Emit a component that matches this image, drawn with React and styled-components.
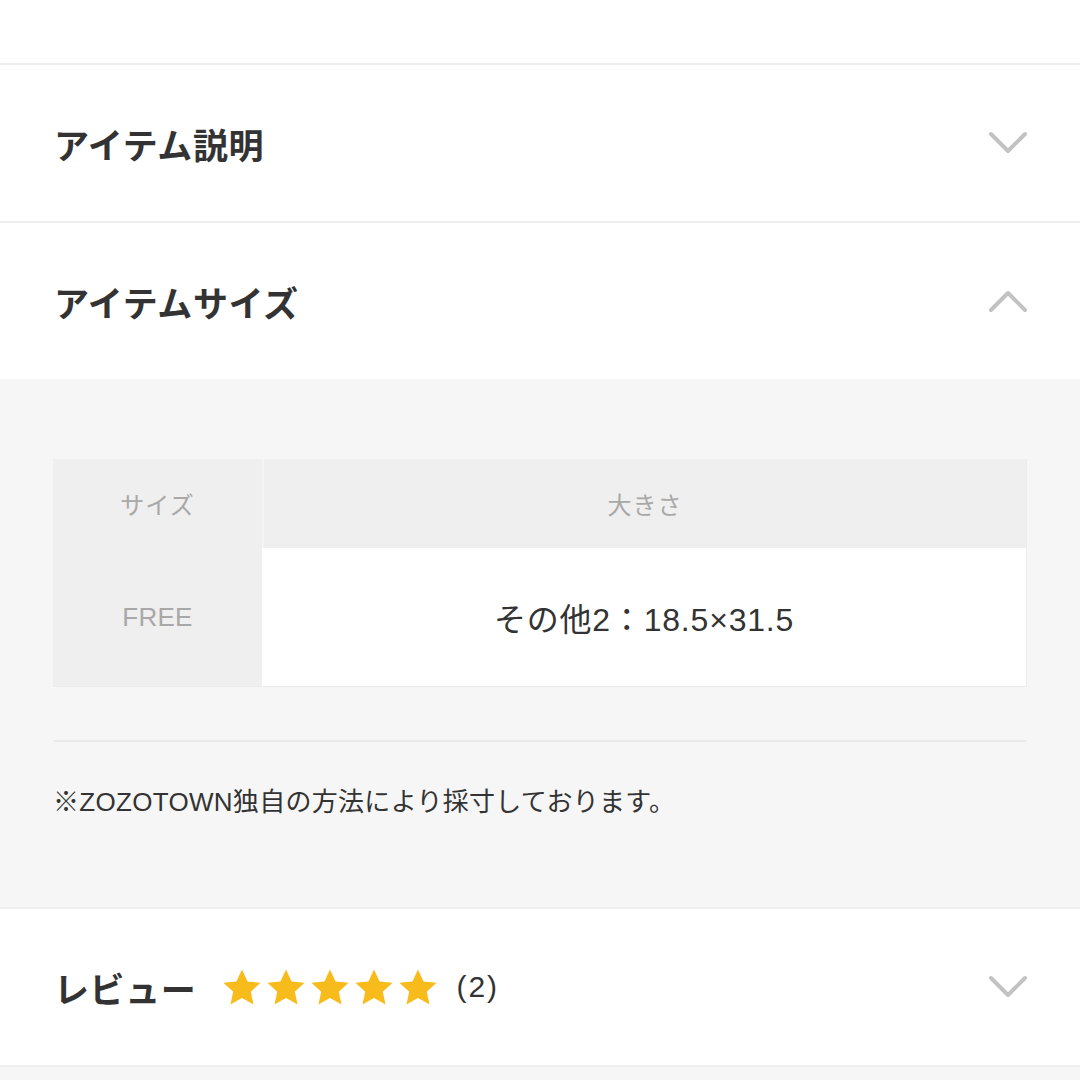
import React from "react"
import styled, { createGlobalStyle } from "styled-components"

const GlobalStyle = createGlobalStyle`
  html, body {
    margin: 0;
    padding: 0;
    background: #ffffff;
  }
  body {
    font-family: "Noto Sans CJK JP", "Liberation Sans", sans-serif;
    color: #333333;
  }
`

const Page = styled.div`
  width: 1080px;
  height: 1080px;
  overflow: hidden;
  background: #f6f6f6;
  display: flex;
  flex-direction: column;
`

const TopSpace = styled.div`
  height: 63px;
  background: #fff;
  border-bottom: 2px solid #efefef;
`

const Section = styled.div`
  height: ${p => p.h || 156}px;
  background: #fff;
  border-bottom: ${p => (p.noBorder ? "none" : "2px solid #efefef")};
  border-top: ${p => (p.topBorder ? "2px solid #efefef" : "none")};
  display: flex;
  align-items: center;
  justify-content: space-between;
  padding: 0 52px 0 54px;
  box-sizing: content-box;
`

const Title = styled.h2`
  margin: 0;
  font-size: 35px;
  font-weight: 700;
  color: #333;
  letter-spacing: 0.6px;
  line-height: 1;
`

const TitleGroup = styled.div`
  display: flex;
  align-items: center;
`

const Stars = styled.div`
  display: flex;
  gap: 6px;
  margin-left: 27px;
`

const Count = styled.span`
  font-family: "Liberation Sans", "Noto Sans CJK JP", sans-serif;
  font-size: 30px;
  color: #333;
  margin-left: 19px;
  letter-spacing: 2px;
`

const Panel = styled.div`
  background: #f6f6f6;
  padding: 80px 53px 0 53px;
  height: 448px;
`

const Table = styled.div`
  display: grid;
  grid-template-columns: 209px 1fr;
  grid-template-rows: 89px 138px;
  background: #fff;
  border-right: 1px solid #ececec;
  border-bottom: 1px solid #ececec;
`

const Cell = styled.div`
  display: flex;
  align-items: center;
  justify-content: center;
  background: ${p => (p.head ? "#efefef" : "#fff")};
  color: ${p => (p.head ? "#a8a8a8" : "#333")};
  font-size: ${p => p.size || 24}px;
  border-left: ${p => (p.divide ? "2px solid #f4f4f4" : "none")};
  font-family: ${p => (p.latin ? '"Liberation Sans", "Noto Sans CJK JP", sans-serif' : '"Noto Sans CJK JP", sans-serif')};
  letter-spacing: ${p => p.spacing || "1px"};
`

const Divider = styled.div`
  height: 2px;
  background: #eaeaea;
  margin-top: 53px;
`

const Note = styled.p`
  margin: 40px 0 0;
  font-size: 26px;
  line-height: 40px;
  color: #333;
  font-family: "Liberation Sans", "Noto Sans CJK JP", sans-serif;
  letter-spacing: 0.3px;
`

const Chevron = ({ up }) => (
  <svg width="40" height="24" viewBox="0 0 40 24">
    <polyline
      points={up ? "3,21 20,4 37,21" : "3,3 20,20 37,3"}
      fill="none"
      stroke="#c2c2c2"
      strokeWidth="4"
      strokeLinecap="round"
      strokeLinejoin="round"
    />
  </svg>
)

const Star = () => (
  <svg width="38" height="36" viewBox="1.5 1.5 21 20">
    <path
      d="M12 1.8l3.1 6.6 7.2.8-5.4 4.9 1.5 7.1L12 17.6l-6.4 3.6 1.5-7.1L1.7 9.2l7.2-.8z"
      fill="#f7bc1c"
    />
  </svg>
)

const App = () => {
  return (
    <>
      <GlobalStyle />
      <Page>
        <TopSpace />
        <Section h={156}>
          <Title>アイテム説明</Title>
          <Chevron />
        </Section>
        <Section h={156} noBorder>
          <Title>アイテムサイズ</Title>
          <Chevron up />
        </Section>
        <Panel>
          <Table>
            <Cell head>サイズ</Cell>
            <Cell head divide>大きさ</Cell>
            <Cell head latin size={26} spacing="0.3px">FREE</Cell>
            <Cell latin size={32} spacing="0.8px">その他2：18.5×31.5</Cell>
          </Table>
          <Divider />
          <Note>※ZOZOTOWN独自の方法により採寸しております。</Note>
        </Panel>
        <Section h={156} topBorder>
          <TitleGroup>
            <Title>レビュー</Title>
            <Stars>
              {[0, 1, 2, 3, 4].map(i => (
                <Star key={i} />
              ))}
            </Stars>
            <Count>(2)</Count>
          </TitleGroup>
          <Chevron />
        </Section>
      </Page>
    </>
  )
}

export default App
